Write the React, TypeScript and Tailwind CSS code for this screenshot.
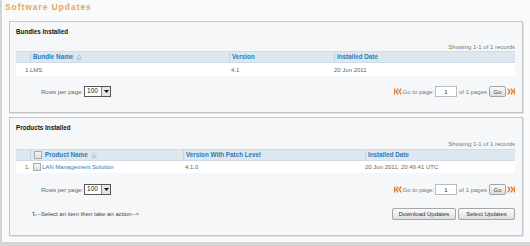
import React from 'react';

const SortIcon = () => (
  <svg width="6" height="6" viewBox="0 0 6 6" className="ml-[3px]">
    <path d="M3 0.8 L5.2 4 L0.8 4 Z" fill="#eef2f6" stroke="#aab4be" strokeWidth="0.7" />
    <path d="M0.3 5.4 H5.7" stroke="#aab4be" strokeWidth="0.7" />
  </svg>
);

const FirstIcon = () => (
  <svg width="8" height="7" viewBox="0 0 8 7">
    <path d="M0.7 0.5 V6.5" stroke="#e0782a" strokeWidth="1.3" />
    <polyline points="4.2,0.7 2.2,3.5 4.2,6.3" fill="none" stroke="#e0782a" strokeWidth="1.3" />
    <polyline points="7.2,0.7 5.2,3.5 7.2,6.3" fill="none" stroke="#e0782a" strokeWidth="1.3" />
  </svg>
);

const LastIcon = () => (
  <svg width="8" height="7" viewBox="0 0 8 7">
    <polyline points="0.8,0.7 2.8,3.5 0.8,6.3" fill="none" stroke="#e0782a" strokeWidth="1.3" />
    <polyline points="3.8,0.7 5.8,3.5 3.8,6.3" fill="none" stroke="#e0782a" strokeWidth="1.3" />
    <path d="M7.3 0.5 V6.5" stroke="#e0782a" strokeWidth="1.3" />
  </svg>
);

const Checkbox = () => (
  <span className="inline-block w-[8px] h-[8px] border border-[#a9adb2] bg-gradient-to-b from-[#f6f6f6] to-[#dcdcdc]" />
);

const Pager = () => (
  <div className="flex items-center justify-between h-[13px]">
    <div className="flex items-center pl-[25px] text-[#666]">
      <span>Rows per page:</span>
      <div className="ml-[1px] flex items-center h-[11px] w-[27px] border border-[#555] bg-white">
        <span className="flex-1 pl-[2px] text-[#222] text-[6.5px]">100</span>
        <span className="w-[9px] h-full border-l border-[#888] bg-[#e4e4e4] flex items-center justify-center">
          <svg width="5" height="3" viewBox="0 0 5 3">
            <path d="M0 0 H5 L2.5 3 Z" fill="#111" />
          </svg>
        </span>
      </div>
    </div>
    <div className="flex items-center text-[#777]">
      <FirstIcon />
      <span className="ml-[1px]">Go to page:</span>
      <span className="ml-[1px] w-[22px] h-[11px] border border-[#b8bcc0] bg-white flex items-center justify-center text-[#333]">
        1
      </span>
      <span className="ml-[2px]">of 1 pages</span>
      <span className="ml-[2px] w-[17px] h-[11px] border border-[#a0a4a8] rounded-[2px] bg-gradient-to-b from-[#fafafa] to-[#dedede] flex items-center justify-center text-[#444]">
        Go
      </span>
      <span className="ml-[1px]">
        <LastIcon />
      </span>
    </div>
  </div>
);

export default function App() {
  return (
    <div className="w-[530px] h-[246px] border-l-2 border-b-4 border-[#d2d4d6] bg-[#f9fafb] font-['Liberation_Sans',Arial,sans-serif] text-[6px] leading-none overflow-hidden">
      <div className="h-[21px] pl-[3px] pt-[2px]">
        <span className="text-[8.4px] leading-[10px] font-bold tracking-[1px] text-[#eba552]">Software Updates</span>
      </div>

      <div className="pl-[7px]">
        {/* Bundles */}
        <div className="w-[514px] h-[92px] border border-[#c4c7ca] shadow-[1px_1px_0_#e2e4e7] bg-[#f5f7f9] pl-[6px] pr-[7px]">
          <div className="h-[21px] flex items-center font-bold text-[6.3px] text-[#111]">Bundles Installed</div>
          <div className="h-[8px] flex items-center justify-end text-[#777]">Showing 1-1 of 1 records</div>
          <div className="flex h-[12px] items-center bg-[#dde7f0] border-y border-[#d0dbe6] font-bold text-[6.3px] text-[#2b7bbd]">
            <div className="w-[14px] h-full" />
            <div className="w-[199px] h-full flex items-center pl-[2px] border-l border-[#c6d3df]">
              Bundle Name
              <SortIcon />
            </div>
            <div className="w-[105px] h-full flex items-center pl-[2px] border-l border-[#c6d3df]">Version</div>
            <div className="flex-1 h-full flex items-center pl-[2px] border-l border-[#c6d3df]">Installed Date</div>
          </div>
          <div className="flex h-[13px] items-center bg-white text-[#666]">
            <div className="w-[14px] text-right">1.</div>
            <div className="w-[199px]">LMS</div>
            <div className="w-[105px] pl-[2px]">4.1</div>
            <div className="flex-1">20 Jun 2011</div>
          </div>
          <div className="mt-[9px]">
            <Pager />
          </div>
        </div>

        {/* Products */}
        <div className="mt-[4px] w-[514px] h-[119px] border border-[#c4c7ca] shadow-[1px_1px_0_#e2e4e7] bg-[#f5f7f9] pl-[6px] pr-[7px]">
          <div className="h-[21px] flex items-center font-bold text-[6.3px] text-[#111]">Products Installed</div>
          <div className="h-[10px] flex items-center justify-end text-[#777]">Showing 1-1 of 1 records</div>
          <div className="flex h-[12px] items-center bg-[#dde7f0] border-y border-[#d0dbe6] font-bold text-[6.3px] text-[#2b7bbd]">
            <div className="w-[14px] h-full" />
            <div className="w-[153px] h-full flex items-center pl-[3px] border-l border-[#c6d3df]">
              <Checkbox />
              <span className="ml-[3px]">Product Name</span>
              <SortIcon />
            </div>
            <div className="w-[182px] h-full flex items-center pl-[2px] border-l border-[#c6d3df]">Version With Patch Level</div>
            <div className="flex-1 h-full flex items-center pl-[2px] border-l border-[#c6d3df]">Installed Date</div>
          </div>
          <div className="flex h-[12px] items-center bg-white text-[#666]">
            <div className="w-[14px] text-right">1.</div>
            <div className="w-[153px] flex items-center pl-[3px]">
              <Checkbox />
              <span className="ml-[1px] text-[#2b7bbd]">LAN Management Solution</span>
            </div>
            <div className="w-[182px] pl-[2px]">4.1.0</div>
            <div className="flex-1">20 Jun 2011, 20:49:41 UTC</div>
          </div>
          <div className="mt-[10px]">
            <Pager />
          </div>
          <div className="mt-[11px] h-[13px] flex items-center justify-between">
            <div className="flex items-center pl-[16px] text-[#444]">
              <svg width="5" height="5" viewBox="0 0 5 5">
                <path d="M1.5 4.5 V1 M0.4 2 L1.5 0.8 L2.6 2 M1.5 4.2 H4.5" fill="none" stroke="#3a9c8c" strokeWidth="0.8" />
              </svg>
              <span>--Select an item then take an action--&gt;</span>
            </div>
            <div className="flex items-center gap-[2px]">
              <span className="w-[64px] h-[12px] border border-[#a4a7aa] rounded-[2px] bg-gradient-to-b from-[#fbfbfb] to-[#dfdfdf] flex items-center justify-center text-[#333]">
                Download Updates
              </span>
              <span className="w-[57px] h-[12px] border border-[#a4a7aa] rounded-[2px] bg-gradient-to-b from-[#fbfbfb] to-[#dfdfdf] flex items-center justify-center text-[#333]">
                Select Updates
              </span>
            </div>
          </div>
        </div>
      </div>
    </div>
  );
}
